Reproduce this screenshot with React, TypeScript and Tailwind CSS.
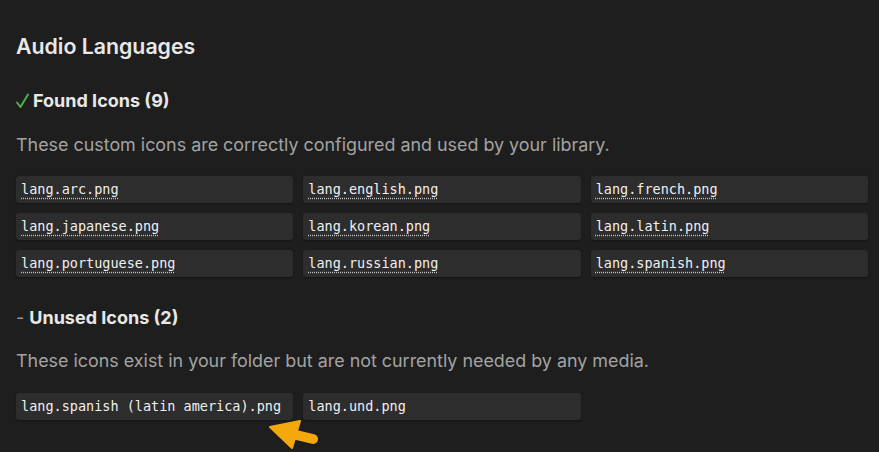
import React from 'react'

const found = [
  'lang.arc.png',
  'lang.english.png',
  'lang.french.png',
  'lang.japanese.png',
  'lang.korean.png',
  'lang.latin.png',
  'lang.portuguese.png',
  'lang.russian.png',
  'lang.spanish.png',
]

const unused = ['lang.spanish (latin america).png', 'lang.und.png']

function IconChip({ name, dotted }: { name: string; dotted?: boolean }) {
  return (
    <div className="h-[27px] flex items-center px-[5px] rounded-[3px] bg-[#2d2d2d] shadow-[0_1px_2px_rgba(0,0,0,0.35)]">
      <span
        className={
          'font-["DejaVu_Sans_Mono",monospace] text-[13.5px] text-[#f0f0f0] whitespace-nowrap ' +
          (dotted ? 'underline decoration-dotted decoration-[#c4c4c4] underline-offset-[3px]' : '')
        }
      >
        {name}
      </span>
    </div>
  )
}

export default function App() {
  return (
    <div className="w-[879px] h-[452px] bg-[#1e1e1e] overflow-hidden font-['Inter',sans-serif] text-[#e8e8e8]">
      <div className="relative pl-4 pr-[11px] pt-[33px]">
        <h2 className="text-[21.3px] font-semibold leading-[26px]">Audio Languages</h2>

        <h3 className="mt-[30px] text-[18px] font-bold leading-[24px] flex items-center">
          <svg className="mr-[4px]" width="13" height="16" viewBox="0 0 13 16">
            <path d="M1 9.5 L4.5 14 L12 1.5" fill="none" stroke="#4caf50" strokeWidth="2" strokeLinecap="round" strokeLinejoin="round" />
          </svg>
          Found Icons (9)
        </h3>
        <p className="mt-[20px] text-[17.9px] leading-[24px] text-[#a3a3a3]">
          These custom icons are correctly configured and used by your library.
        </p>
        <div className="mt-[19px] grid grid-cols-3 gap-[10px]">
          {found.map((n) => (
            <IconChip key={n} name={n} dotted />
          ))}
        </div>

        <h3 className="mt-[29px] text-[18px] font-bold leading-[24px] flex items-center">
          <span className="text-[#9a9a9a] font-normal mr-[5px]">-</span>
          Unused Icons (2)
        </h3>
        <p className="mt-[19px] text-[17.9px] leading-[24px] text-[#a3a3a3]">
          These icons exist in your folder but are not currently needed by any media.
        </p>
        <div className="mt-[20px] grid grid-cols-3 gap-x-[10px]">
          {unused.map((n) => (
            <IconChip key={n} name={n} />
          ))}
        </div>

        {/* annotation arrow */}
        <svg className="absolute left-[266px] top-[417px]" width="56" height="35" viewBox="0 0 56 35">
          <path d="M22 16 L47 22" stroke="#f5a80b" strokeWidth="10" strokeLinecap="round" />
          <path d="M4 10 L34 4 L26 31 Z" fill="#f5a80b" stroke="#f5a80b" strokeWidth="2" strokeLinejoin="round" />
        </svg>
      </div>
    </div>
  )
}
